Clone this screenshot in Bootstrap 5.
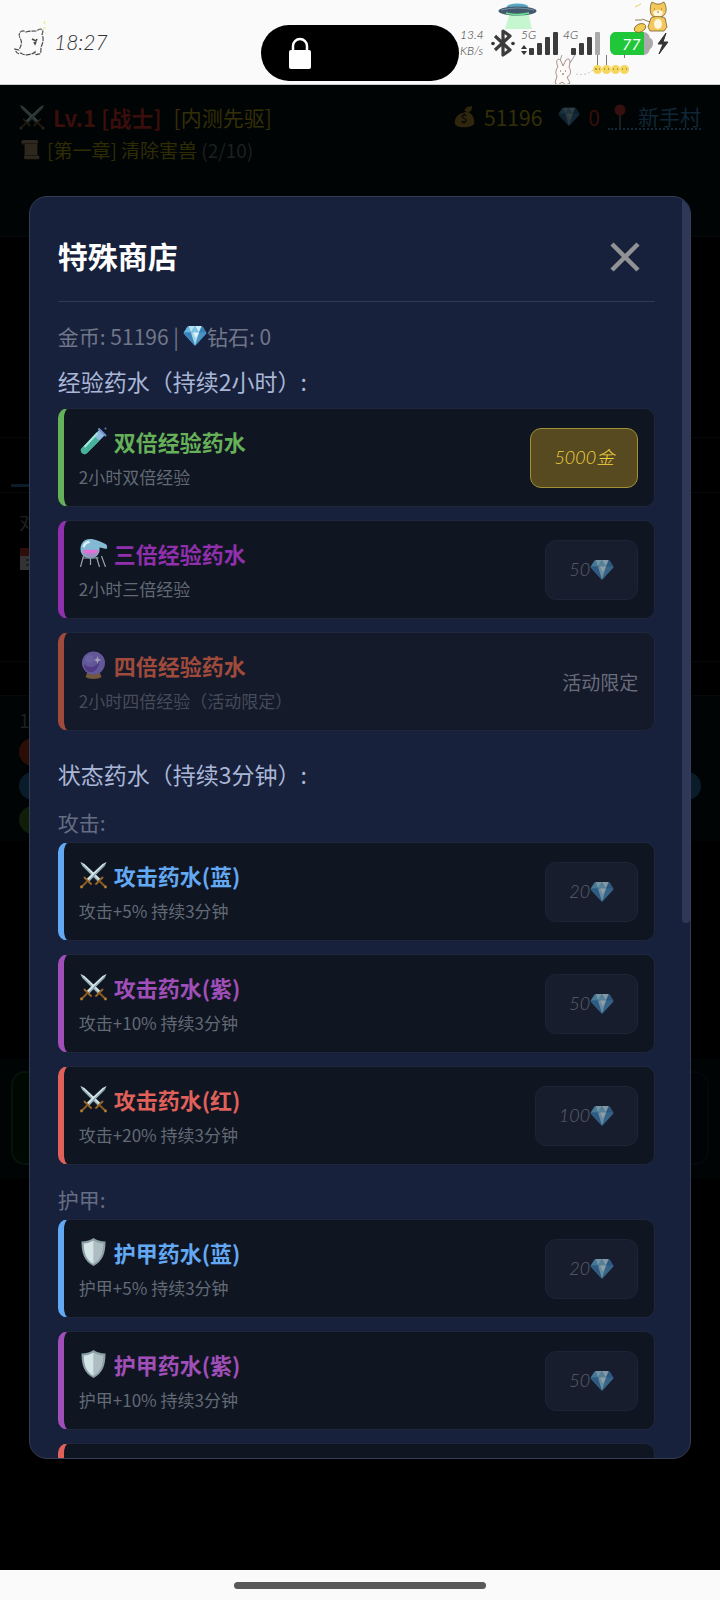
<!DOCTYPE html>
<html lang="zh-CN">
<head>
<meta charset="utf-8">
<meta name="viewport" content="width=device-width, initial-scale=1">
<title>特殊商店</title>
<link href="https://cdn.jsdelivr.net/npm/bootstrap@5.3.0/dist/css/bootstrap.min.css" rel="stylesheet">
<style>
  body { min-height: 100vh; background: #000; color: #8b93a5; font-family: "Noto Sans CJK SC", "Noto Sans", sans-serif; }
  .script-font { font-family: Lato, "Noto Sans CJK SC", sans-serif; font-style: italic; font-weight: 300; }

  /* phone status bar */
  .status-bar { height: 85px; background: #fafafa; border-bottom: 1px solid #c8cccc; color: #333; padding: 0 40px 0 14px; }
  .status-time { font-size: 21px; }
  .island { width: 198px; height: 56px; top: 25px; left: 50%; margin-left: -99px; border-radius: 28px; background: #000; padding-left: 26px; }
  .home-bar { height: 30px; background: #fafafa; }
  .home-pill { width: 252px; height: 7px; border-radius: 4px; background: #595959; }

  /* dimmed game page */
  .game { background: #000; }
  .game-panel { background: #000405; }
  .game-line { border-bottom: 1px solid #06090b; }
  .game-head { padding: 14px 19px; }
  .head-main { font-size: 21px; line-height: 36px; }
  .head-level { font-size: 22px; }
  .head-quest { font-size: 19px; line-height: 30px; color: #302c04; }
  .dim-icon { opacity: .25; }
  .c-red { color: #390e0b; }
  .c-gold { color: #352f05; }
  .c-blue { color: #102636; }
  .c-gray { color: #1c201f; }
  .place-link { border-bottom: 2px dotted #102636; line-height: 24px; text-decoration: none; padding-left: 6px; gap: 12px; }
  .h-sub { height: 58px; }
  .h-scene { height: 201px; }
  .h-tabs { height: 55px; padding: 0 11px; }
  .h-log { height: 169px; padding: 12px 19px; font-size: 19px; line-height: 34px; }
  .h-gap { height: 34px; }
  .h-stats { height: 145px; padding: 6px 19px; font-size: 19px; line-height: 36px; }
  .h-empty { height: 217px; }
  .h-actions { height: 120px; padding: 13px 11px; }
  .tab-mark { width: 90px; height: 3px; background: #0a1b29; margin-bottom: 5px; }
  .stat-pill { border-radius: 14px; height: 28px; margin-bottom: 6px; }
  .pill-hp { background: #2a0e06; } .pill-mp { background: #0a1c2a; } .pill-xp { background: #101e09; }
  .act { border-radius: 14px; border: 2px solid #05130a; background: #000901; }
  .act-alt { border-color: #05080b; background: #010406; }

  /* shop dialog */
  .shop { width: 92%; height: 85%; background: #18213c; border: 1px solid #343d57; border-radius: 18px; }
  .shop-scroll { overflow-y: auto; scrollbar-width: none; padding: 28px 35px 28px 28px; }
  .shop-scroll::-webkit-scrollbar { display: none; }
  .thumb { width: 8px; height: 725px; top: 1px; right: 0; border-radius: 4px; background: #2f3859; }
  .shop-head { height: 77px; padding-bottom: 12px; border-bottom: 1px solid #2f3952; }
  .shop-title { font-size: 30px; line-height: 44px; color: #fff; }
  .close-btn { margin-right: 15px; }
  .purse { font-size: 21px; line-height: 32px; margin-top: 18px; color: #707789; }
  .group-title { font-size: 23px; line-height: 34px; color: #a9b6d6; margin: 12px 0 10px; }
  .group-title.later { margin: 26px 0 15px; }
  .kind { font-size: 21px; line-height: 32px; color: #646d82; margin: 0 0 4px; }
  .kind.later { margin-top: 18px; }
  .stack { gap: 13px; }
  .potion { min-height: 99px; flex-shrink: 0; padding: 0 16px 0 15px; border: 1px solid #1e273c; border-left: 6px solid var(--tone); border-radius: 10px; background: #0f1521; }
  .potion-name { font-size: 22px; line-height: 34px; color: var(--tone); gap: 6px; }
  .potion-desc { font-size: 17px; line-height: 28px; margin-top: 5px; color: #626a76; }
  .limited { background: #141a2a; }
  .limited .potion-desc { color: #444b59; }
  .limited .potion-name svg { opacity: .7; }
  .limit-note { font-size: 19px; color: #686c7b; }
  .buy { height: 60px; padding: 0 23px; border: 1px solid #a08f35; border-radius: 11px; background: #574a21; color: #f0d240; font-size: 18px; }
  .buy:disabled { background: #181d2e; border-color: #1e2438; color: #5c606b; }
  .buy:disabled svg { opacity: .6; }
  .t-green { --tone: #65b058; } .t-violet { --tone: #9030ac; } .t-rust { --tone: #a04a3b; }
  .t-blue { --tone: #62a8f2; } .t-purple { --tone: #a04fb8; } .t-red { --tone: #e0605a; }
</style>
</head>
<body class="d-flex flex-column">

<svg width="0" height="0" class="position-absolute" aria-hidden="true">
  <defs>
    <symbol id="gem" viewBox="0 0 24 24">
      <path d="M6 2h12q1 0 2 1l3 5q1 1 0 2L13 21q-1 1-2 0L1 10q-1-1 0-2l3-5q1-1 2-1z" fill="#4b94c6"/>
      <path d="M5 2.500 8 8.500H1z" fill="#69b7df"/><path d="M5.500 2H12L8 8.500z" fill="#b4e2f1"/>
      <path d="M12 2 16 8.500H8z" fill="#7cc4e3"/><path d="M12 2h6.500L16 8.500z" fill="#c9edf5"/>
      <path d="M19 2.500 23 8.500h-7z" fill="#397fb5"/><path d="M1 8.500h7L12 21.500z" fill="#3b82ba"/>
      <path d="M8 8.500h8L12 21.500z" fill="#a3d6e8"/><path d="M10 8.500h6l-3 6z" fill="#dcf4f8"/>
    </symbol>
    <symbol id="swords" viewBox="0 0 28 28">
      <g id="blade"><path d="M1 1 5 3 21 18 18.500 20.500 3 5z" fill="#d7e8ea"/><path d="M1 1 19.500 19.500 18.500 20.500 3 5z" fill="#8ba6ae"/>
      <path d="M16.500 23 23 16.500" stroke="#9a6724" stroke-width="1.800" stroke-linecap="round"/><path d="M20.500 20.500 26 26" stroke="#8a5a20" stroke-width="2"/><circle cx="26" cy="26" r="1.400" fill="#b9802c"/></g>
      <use href="#blade" transform="matrix(-1 0 0 1 28 0)"/>
    </symbol>
    <symbol id="shield" viewBox="0 0 28 28">
      <path d="M14 0c3 2 7 3.500 12 3.500C26 15 23.500 23 14 28 4.500 23 2 15 2 3.500 7 3.500 11 2 14 0z" fill="#8aa0a6"/>
      <path d="M14 2.500c2.500 1.500 6 2.800 9.800 3C23.500 15 21.500 21.500 14 26z" fill="#aebdc1"/>
      <path d="M14 2.500C11.500 4 8 5.300 4.200 5.500 4.500 15 6.500 21.500 14 26z" fill="#d5e4e6"/>
    </symbol>
    <symbol id="tube" viewBox="0 0 28 28">
      <path d="M20.500 2 26 7.500 7 26.500C4 29-.500 24 2 21.500z" fill="#8fb9e0"/>
      <path d="M14 9 20 13.500 7 26.500C4 29-.500 24 2 21.500z" fill="#45b29a"/>
      <path d="M18 6 5 20" stroke="#a5e6da" stroke-width="2"/><path d="M19.500 2 26 8.500" stroke="#6f8fc4" stroke-width="2" stroke-linecap="round"/>
      <circle cx="26" cy="1.500" r="1" fill="#5a86b5"/>
    </symbol>
    <symbol id="alembic" viewBox="0 0 28 28">
      <path d="M4 17 1 28M22 17l4 11M11 18v8M17 18l3 10" stroke="#9aa4a9" stroke-width="1.200" fill="none"/>
      <path d="M10 0c5 0 9 1.500 16 5 2 1 2 3 1 5L20 8.500C21 15 16 19.500 11 19.500S1 16 1 10 5 0 10 0z" fill="#84b9d3"/>
      <path d="M3 11h16c0 5-4 7.500-8 7.500S3 16 3 11z" fill="#9f8fc4"/><path d="M4 12.500h14" stroke="#e36fd8" stroke-width="3.400"/>
      <path d="M4 8c1-3 3-5 6-5" stroke="#d8f1f7" stroke-width="2.500" fill="none"/><path d="M3 19h16" stroke="#85949c" stroke-width="1.200"/>
    </symbol>
    <symbol id="ball" viewBox="0 0 28 28">
      <path d="M8 21h12l2 5c-3 2.500-13 2.500-16 0z" fill="#9e7146"/>
      <circle cx="14" cy="12" r="11.500" fill="#8372c8"/><path d="M5 13c4 5 12 4 15-4 0 8-5 13-10 12-4-1-6-5-5-8z" fill="#6c48ad"/>
      <circle cx="10" cy="8" r="4" fill="#8f7fd2"/><path d="M18 5l1 3 3 1-3 1-1 3-1-3-3-1 3-1z" fill="#dcd8fa"/>
    </symbol>
    <symbol id="bag" viewBox="0 0 24 24">
      <path d="M14 1l6-1-1 5-4 2-4-2z" fill="#b98730"/><path d="M11 7c7-2 12 5 11 12-1 5-20 6-21 0C0 13 5 8 11 7z" fill="#c08a2c"/>
      <text x="7" y="19" font-size="13" fill="#3b2603" font-weight="700">$</text>
    </symbol>
    <symbol id="scroll" viewBox="0 0 24 24"><path d="M3 1h15c2 0 2 3 1 4v13h2v4H6c-2 0-2-3-1-4V6H3C1 5 1 2 3 1z" fill="#b9906a"/><path d="M3 5h15M6 18h14" stroke="#6a4a30"/></symbol>
    <symbol id="pin" viewBox="0 0 12 24"><path d="M6 8v16" stroke="#8a9199" stroke-width="1.500"/><circle cx="6" cy="6" r="5.500" fill="#d6342b"/></symbol>
    <symbol id="cal" viewBox="0 0 24 24"><rect x="1" y="1" width="22" height="22" fill="#c9c9c9"/><rect x="1" y="1" width="22" height="8" fill="#b7372c"/><path d="M7 13h10M7 18h10" stroke="#777" stroke-width="2"/></symbol>
  </defs>
</svg>

<header class="status-bar position-relative d-flex align-items-center justify-content-between">
  <div class="d-flex align-items-center gap-2">
    <svg width="32" height="50" viewBox="0 0 32 50" fill="none" stroke="#4b4b4b" stroke-width="1.200" aria-hidden="true">
      <path d="M6 21c-3-5 2-9 6-6 4-1 7-1 11-1 3-4 8-1 5 3 2 5 1 9-1 13 0 5 0 8-3 7-1 1-3 1-3-2-3 3-12 4-14 1-4 2-5-1-6-4l4 1c2-5 4-7 1-12z" stroke-dasharray="5 1"/>
      <path d="M18 22l4 2 1-2M20 25l1 2 1-2" stroke-width="1.600"/>
      <path d="M29 13l2-3M31 16h1M30 7l1-3" stroke="#f2e68a"/>
    </svg>
    <span class="status-time script-font">18:27</span>
  </div>
  <div class="island position-absolute d-flex align-items-center">
    <svg width="26" height="36" viewBox="0 0 26 36" aria-hidden="true"><path d="M6 17V11a7 7 0 0 1 14 0v6" fill="none" stroke="#fff" stroke-width="2.500"/><rect x="2" y="15" width="22" height="19" rx="2" fill="#fff"/></svg>
  </div>
  <svg class="script-font" width="220" height="84" viewBox="0 0 220 84" fill="#333" aria-label="网络与电量">
    <text x="0" y="39" font-size="12">13.4</text><text x="0" y="55" font-size="12">KB/s</text>
    <path d="M35 36 50 50 43 55V31l7 5-15 14" fill="none" stroke="#3c3c3c" stroke-width="3.200" stroke-linejoin="round"/><circle cx="33" cy="43.500" r="1.800"/><circle cx="53" cy="43.500" r="1.800"/>
    <text x="61" y="39" font-size="12">5G</text><text x="103" y="39" font-size="12">4G</text>
    <path d="M61 49l3-4 3 4zM61 51l3 4 3-4z"/>
    <g fill="#3c3c3c"><rect x="69" y="48" width="5" height="7" rx="1"/><rect x="77" y="43" width="5" height="12" rx="1"/><rect x="85" y="37" width="5" height="18" rx="1"/><rect x="93" y="32" width="5" height="23" rx="1"/>
    <rect x="111" y="48" width="5" height="7" rx="1"/><rect x="119" y="43" width="5" height="12" rx="1"/><rect x="127" y="37" width="5" height="18" rx="1"/></g>
    <rect x="135" y="32" width="5" height="23" rx="1" fill="#aaa"/>
    <!-- saucer -->
    <path d="M50 12h18l4 17H45z" fill="#b9f5c5" opacity=".8"/><ellipse cx="57.500" cy="7" rx="11" ry="3.500" fill="#55a9c4"/><ellipse cx="57.500" cy="11" rx="19" ry="4.500" fill="#43586a"/><path d="M46 13q11 3 23 0" stroke="#69e193" stroke-width="1.500" fill="none"/><path d="M41 10q16-4 33 0" stroke="#7391a8" fill="none"/>
    <!-- battery -->
    <path d="M156 32h26c6 0 7 3 8 6 4 1 4 9 0 11-1 3-2 6-8 6h-26c-4 0-6-3-6-7v-9c0-4 2-7 6-7z" fill="#aaa"/><path d="M156 32h28v23h-28c-4 0-6-3-6-7v-9c0-4 2-7 6-7z" fill="#20c839"/>
    <text x="162" y="50" font-size="16" fill="#fff" style="font-weight:400">77</text>
    <path d="M206 33l-8 11h5l-4 10 9-12h-5z" stroke="#333"/>
    <!-- shiba with drum -->
    <g stroke="#77602b" stroke-width=".8"><path d="M191 4l1-2 4 2h4l4-2 1 2c2 5 1 8 0 10-3 5-12 5-14 0-1-3-1-6 0-10z" fill="#f2c85c"/><path d="M193 12q5-4 10 0-1 5-5 5t-5-5z" fill="#fff6de" stroke="none"/><path d="M191 18c3-2 10-2 14 0l2 9-3 4h-14l-2-4z" fill="#f2c85c"/><ellipse cx="198" cy="24" rx="4" ry="5" fill="#fff6de" stroke="none"/><path d="M190 22l-8-3" fill="none"/><ellipse cx="180" cy="28" rx="6" ry="4" fill="#f2cc50" transform="rotate(-25 180 28)"/><path d="M194 9h1M201 9h1M197 12h2M175 20h7"/></g>
    <path d="M175 7l6-3" stroke="#e5cd65"/>
    <!-- rabbit and faces -->
    <path d="M102 55 98 66M115 55l-5 8" stroke="#777" stroke-width=".7"/>
    <g fill="#fffaf7" stroke="#8b756c" stroke-width=".8"><path d="M98 67c-3-7 0-10 3-6l2 5 3-6c4-3 5 1 3 7 3 5 1 9-2 10l3 6-4 2-4-3-4 3-3-2 2-7c-2-3-1-7 1-9z"/><path d="M100 71h1M105 71h1M102 74h2" stroke="#333"/></g>
    <path d="M116 74q12 2 18-5" fill="none" stroke="#ccc" stroke-dasharray="2 2"/><path d="M137.500 55v11M146.500 55v11M164.500 54v4" stroke="#777"/>
    <g fill="#f6d75d"><circle cx="137.500" cy="69.500" r="4.500"/><circle cx="146.500" cy="69.500" r="4.500"/><circle cx="155.500" cy="69.500" r="4.500"/><circle cx="164.500" cy="69.500" r="4.500"/></g>
    <path d="M135 69h2M139 69h1M144 69h1M148 69h1M153 69h1M157 69h1M162 69h1M166 69h1" stroke="#775b1e"/>
  </svg>
</header>

<main class="game position-relative flex-grow-1 overflow-hidden">
  <div class="game-panel game-head">
    <div class="head-main d-flex align-items-center justify-content-between">
      <div class="d-flex align-items-center gap-2">
        <svg class="dim-icon" width="26" height="26"><use href="#swords"/></svg>
        <strong class="head-level c-red">Lv.1 [战士]</strong><span class="c-gold ms-1">[内测先驱]</span>
      </div>
      <div class="d-flex align-items-center">
        <svg class="dim-icon me-2" width="22" height="24"><use href="#bag"/></svg><span class="c-gold me-3">51196</span>
        <svg class="dim-icon me-2" width="22" height="24"><use href="#gem"/></svg><span class="c-red me-2">0</span>
        <a href="#" class="place-link c-blue d-flex align-items-center"><svg class="dim-icon" width="12" height="24"><use href="#pin"/></svg>新手村</a>
      </div>
    </div>
    <div class="head-quest d-flex align-items-center">
      <svg class="dim-icon" width="24" height="22"><use href="#scroll"/></svg>
      <span class="ms-1">[第一章] 清除害兽 <span class="c-gray">(2/10)</span></span>
    </div>
  </div>
  <div class="game-panel game-line h-sub"></div>
  <div class="game-line h-scene"></div>
  <div class="game-line h-tabs d-flex align-items-end"><div class="tab-mark"></div></div>
  <div class="game-line h-log c-gray"><div>对</div><svg class="dim-icon" width="24" height="24"><use href="#cal"/></svg></div>
  <div class="game-line h-gap"></div>
  <div class="game-panel h-stats c-gray">
    <div>1</div>
    <div class="stat-pill pill-hp w-75"></div>
    <div class="stat-pill pill-mp"></div>
    <div class="stat-pill pill-xp w-50"></div>
  </div>
  <div class="h-empty"></div>
  <div class="game-panel h-actions d-flex gap-3">
    <div class="act flex-fill"></div><div class="act act-alt flex-fill"></div>
  </div>

  <div class="position-absolute top-0 start-0 w-100 h-100 d-flex align-items-center justify-content-center">
    <section class="shop position-relative overflow-hidden" role="dialog" aria-labelledby="shopTitle">
      <div class="shop-scroll h-100">
        <div class="shop-head d-flex align-items-center justify-content-between">
          <h1 class="shop-title fw-bold mt-0 mb-1" id="shopTitle">特殊商店</h1>
          <button type="button" class="close-btn btn p-0 border-0 d-flex" aria-label="关闭">
            <svg width="30" height="30" viewBox="0 0 30 30"><path d="M2 2 28 28M28 2 2 28" stroke="#909294" stroke-width="4.500"/></svg>
          </button>
        </div>
        <div class="purse d-flex align-items-center">金币: 51196 |<svg class="ms-1" width="24" height="24"><use href="#gem"/></svg>钻石: 0</div>

        <h2 class="group-title fw-normal">经验药水（持续2小时）:</h2>
        <div class="stack d-flex flex-column">
          <article class="potion t-green d-flex align-items-center justify-content-between">
            <div><div class="potion-name fw-bold d-flex align-items-center"><svg width="29" height="28"><use href="#tube"/></svg>双倍经验药水</div><div class="potion-desc">2小时双倍经验</div></div>
            <button type="button" class="buy script-font">5000金</button>
          </article>
          <article class="potion t-violet d-flex align-items-center justify-content-between">
            <div><div class="potion-name fw-bold d-flex align-items-center"><svg width="29" height="28"><use href="#alembic"/></svg>三倍经验药水</div><div class="potion-desc">2小时三倍经验</div></div>
            <button type="button" class="buy script-font d-flex align-items-center" disabled>50<svg width="24" height="24"><use href="#gem"/></svg></button>
          </article>
          <article class="potion limited t-rust d-flex align-items-center justify-content-between">
            <div><div class="potion-name fw-bold d-flex align-items-center"><svg width="29" height="28"><use href="#ball"/></svg>四倍经验药水</div><div class="potion-desc">2小时四倍经验（活动限定）</div></div>
            <span class="limit-note">活动限定</span>
          </article>
        </div>

        <h2 class="group-title later fw-normal">状态药水（持续3分钟）:</h2>
        <h3 class="kind fw-normal">攻击:</h3>
        <div class="stack d-flex flex-column">
          <article class="potion t-blue d-flex align-items-center justify-content-between">
            <div><div class="potion-name fw-bold d-flex align-items-center"><svg width="29" height="28"><use href="#swords"/></svg>攻击药水(蓝)</div><div class="potion-desc">攻击+5% 持续3分钟</div></div>
            <button type="button" class="buy script-font d-flex align-items-center" disabled>20<svg width="24" height="24"><use href="#gem"/></svg></button>
          </article>
          <article class="potion t-purple d-flex align-items-center justify-content-between">
            <div><div class="potion-name fw-bold d-flex align-items-center"><svg width="29" height="28"><use href="#swords"/></svg>攻击药水(紫)</div><div class="potion-desc">攻击+10% 持续3分钟</div></div>
            <button type="button" class="buy script-font d-flex align-items-center" disabled>50<svg width="24" height="24"><use href="#gem"/></svg></button>
          </article>
          <article class="potion t-red d-flex align-items-center justify-content-between">
            <div><div class="potion-name fw-bold d-flex align-items-center"><svg width="29" height="28"><use href="#swords"/></svg>攻击药水(红)</div><div class="potion-desc">攻击+20% 持续3分钟</div></div>
            <button type="button" class="buy script-font d-flex align-items-center" disabled>100<svg width="24" height="24"><use href="#gem"/></svg></button>
          </article>
        </div>

        <h3 class="kind later fw-normal">护甲:</h3>
        <div class="stack d-flex flex-column">
          <article class="potion t-blue d-flex align-items-center justify-content-between">
            <div><div class="potion-name fw-bold d-flex align-items-center"><svg width="29" height="28"><use href="#shield"/></svg>护甲药水(蓝)</div><div class="potion-desc">护甲+5% 持续3分钟</div></div>
            <button type="button" class="buy script-font d-flex align-items-center" disabled>20<svg width="24" height="24"><use href="#gem"/></svg></button>
          </article>
          <article class="potion t-purple d-flex align-items-center justify-content-between">
            <div><div class="potion-name fw-bold d-flex align-items-center"><svg width="29" height="28"><use href="#shield"/></svg>护甲药水(紫)</div><div class="potion-desc">护甲+10% 持续3分钟</div></div>
            <button type="button" class="buy script-font d-flex align-items-center" disabled>50<svg width="24" height="24"><use href="#gem"/></svg></button>
          </article>
          <article class="potion t-red"></article>
        </div>
      </div>
      <div class="thumb position-absolute"></div>
    </section>
  </div>
</main>

<footer class="home-bar d-flex align-items-center justify-content-center"><div class="home-pill"></div></footer>
<script src="https://cdn.jsdelivr.net/npm/bootstrap@5.3.0/dist/js/bootstrap.bundle.min.js"></script>
</body>
</html>
